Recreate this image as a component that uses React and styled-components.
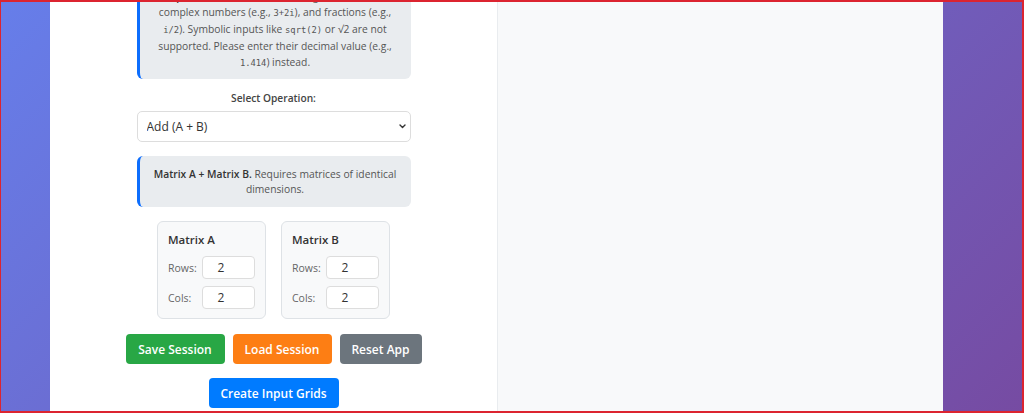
import React from 'react';
import styled, { createGlobalStyle } from 'styled-components';

const GlobalStyle = createGlobalStyle`
  html, body {
    margin: 0;
    padding: 0;
    height: 413px;
    overflow: hidden;
  }
  body {
    font-family: "Open Sans", "Liberation Sans", sans-serif;
    background: linear-gradient(135deg, #667eea 0%, #764ba2 100%);
    color: #333;
  }
`;

const Frame = styled.div`
  position: fixed;
  inset: 0;
  border: 2px solid #dc2430;
  border-left-width: 1px;
  pointer-events: none;
  z-index: 10;
`;

const Page = styled.div`
  padding-left: 50px;
  height: 413px;
  overflow: hidden;
`;

const Container = styled.div`
  width: 893px;
  height: 413px;
  background: #ffffff;
  display: grid;
  grid-template-columns: 447px 1fr;
`;

const LeftPanel = styled.div`
  display: flex;
  flex-direction: column;
  align-items: center;
`;

const RightPanel = styled.div`
  background: #f8f9fa;
  border-left: 1px solid #e9ecef;
`;

const Column = styled.div`
  width: 274px;
  display: flex;
  flex-direction: column;
`;

const InfoBox = styled.div`
  box-sizing: border-box;
  background: #e9ecef;
  border-left: 3px solid #0d6efd;
  border-radius: 6px;
  padding: ${p => p.$pad || '10px 8px'};
  margin-top: ${p => p.$top || 0}px;
  font-size: 10.3px;
  line-height: ${p => p.$lh || 16}px;
  color: #555;
  text-align: center;
  white-space: nowrap;

  b {
    color: #333;
    font-weight: 600;
  }
`;

const Code = styled.code`
  font-family: "DejaVu Sans Mono", "Liberation Mono", monospace;
  font-size: 8.8px;
  color: #555;
`;

const Label = styled.div`
  margin-top: 11px;
  text-align: center;
  font-size: 10.2px;
  line-height: 16px;
  font-weight: 600;
  color: #444;
`;

const SelectWrap = styled.div`
  position: relative;
  margin-top: 5px;
  display: flex;
`;

const Select = styled.select`
  flex: 1;
  height: 31px;
  border: 1px solid #ddd;
  border-radius: 5px;
  background: #fff;
  padding: 0 20px 0 9px;
  font-family: inherit;
  font-size: 12px;
  color: #333;
  outline: none;
  appearance: none;
`;

const Chevron = styled.svg`
  position: absolute;
  right: 5px;
  top: 13px;
  width: 7px;
  height: 5px;
  pointer-events: none;
`;

const CardRow = styled.div`
  margin-top: 14px;
  display: flex;
  justify-content: center;
  gap: 15px;
`;

const Card = styled.div`
  box-sizing: border-box;
  width: 109px;
  height: 98px;
  padding: 9px 10px;
  background: #f8f9fa;
  border: 1px solid #dee2e6;
  border-radius: 6px;
`;

const CardTitle = styled.div`
  font-size: 11.5px;
  line-height: 18px;
  font-weight: 600;
  color: #333;
`;

const Field = styled.div`
  display: flex;
  align-items: center;
  margin-top: 7px;
`;

const FieldLabel = styled.span`
  width: 35px;
  font-size: 10.5px;
  color: #666;
`;

const NumInput = styled.input`
  box-sizing: border-box;
  width: 53px;
  height: 23px;
  border: 1px solid #ddd;
  border-radius: 4px;
  background: #fff;
  text-align: center;
  font-family: inherit;
  font-size: 12px;
  color: #333;
  padding: 0;
`;

const ButtonRow = styled.div`
  margin-top: ${p => p.$top}px;
  display: flex;
  justify-content: center;
  gap: 8px;
`;

const Button = styled.button`
  height: 30px;
  width: ${p => p.$w}px;
  border: none;
  border-radius: 4px;
  background: ${p => p.$bg};
  color: #fff;
  font-family: inherit;
  font-size: 12px;
  font-weight: 600;
  cursor: pointer;
`;

export default function App() {
  return (
    <>
      <GlobalStyle />
      <Frame />
      <Page>
        <Container>
          <LeftPanel>
            <Column>
              <InfoBox $top={-22} $pad="10px 8px 8px">
                <b>Input Note:</b> Values can be integers, decimals,<br />
                complex numbers (e.g., <Code>3+2i</Code>), and fractions (e.g.,<br />
                <Code>i/2</Code>). Symbolic inputs like <Code>sqrt(2)</Code> or √2 are not<br />
                supported. Please enter their decimal value (e.g.,<br />
                <Code>1.414</Code>) instead.
              </InfoBox>
              <Label>Select Operation:</Label>
              <SelectWrap>
                <Select defaultValue="add">
                  <option value="add">Add (A + B)</option>
                  <option value="sub">Subtract (A - B)</option>
                  <option value="mul">Multiply (A × B)</option>
                </Select>
                <Chevron viewBox="0 0 7 5">
                  <path d="M1 1l2.5 2.5L6 1" fill="none" stroke="#333" strokeWidth="1.4" strokeLinecap="round" strokeLinejoin="round" />
                </Chevron>
              </SelectWrap>
              <InfoBox $top={14} $lh={15} $pad="10.5px 8px">
                <b>Matrix A + Matrix B.</b> Requires matrices of identical<br />
                dimensions.
              </InfoBox>
              <CardRow>
                {['A', 'B'].map(name => (
                  <Card key={name}>
                    <CardTitle>Matrix {name}</CardTitle>
                    <Field>
                      <FieldLabel>Rows:</FieldLabel>
                      <NumInput type="number" defaultValue={2} />
                    </Field>
                    <Field>
                      <FieldLabel>Cols:</FieldLabel>
                      <NumInput type="number" defaultValue={2} />
                    </Field>
                  </Card>
                ))}
              </CardRow>
            </Column>
            <ButtonRow $top={15}>
              <Button $bg="#28a745" $w={99}>Save Session</Button>
              <Button $bg="#fd7e14" $w={99}>Load Session</Button>
              <Button $bg="#6c757d" $w={82}>Reset App</Button>
            </ButtonRow>
            <ButtonRow $top={14}>
              <Button $bg="#007bff" $w={130}>Create Input Grids</Button>
            </ButtonRow>
          </LeftPanel>
          <RightPanel />
        </Container>
      </Page>
    </>
  );
}
